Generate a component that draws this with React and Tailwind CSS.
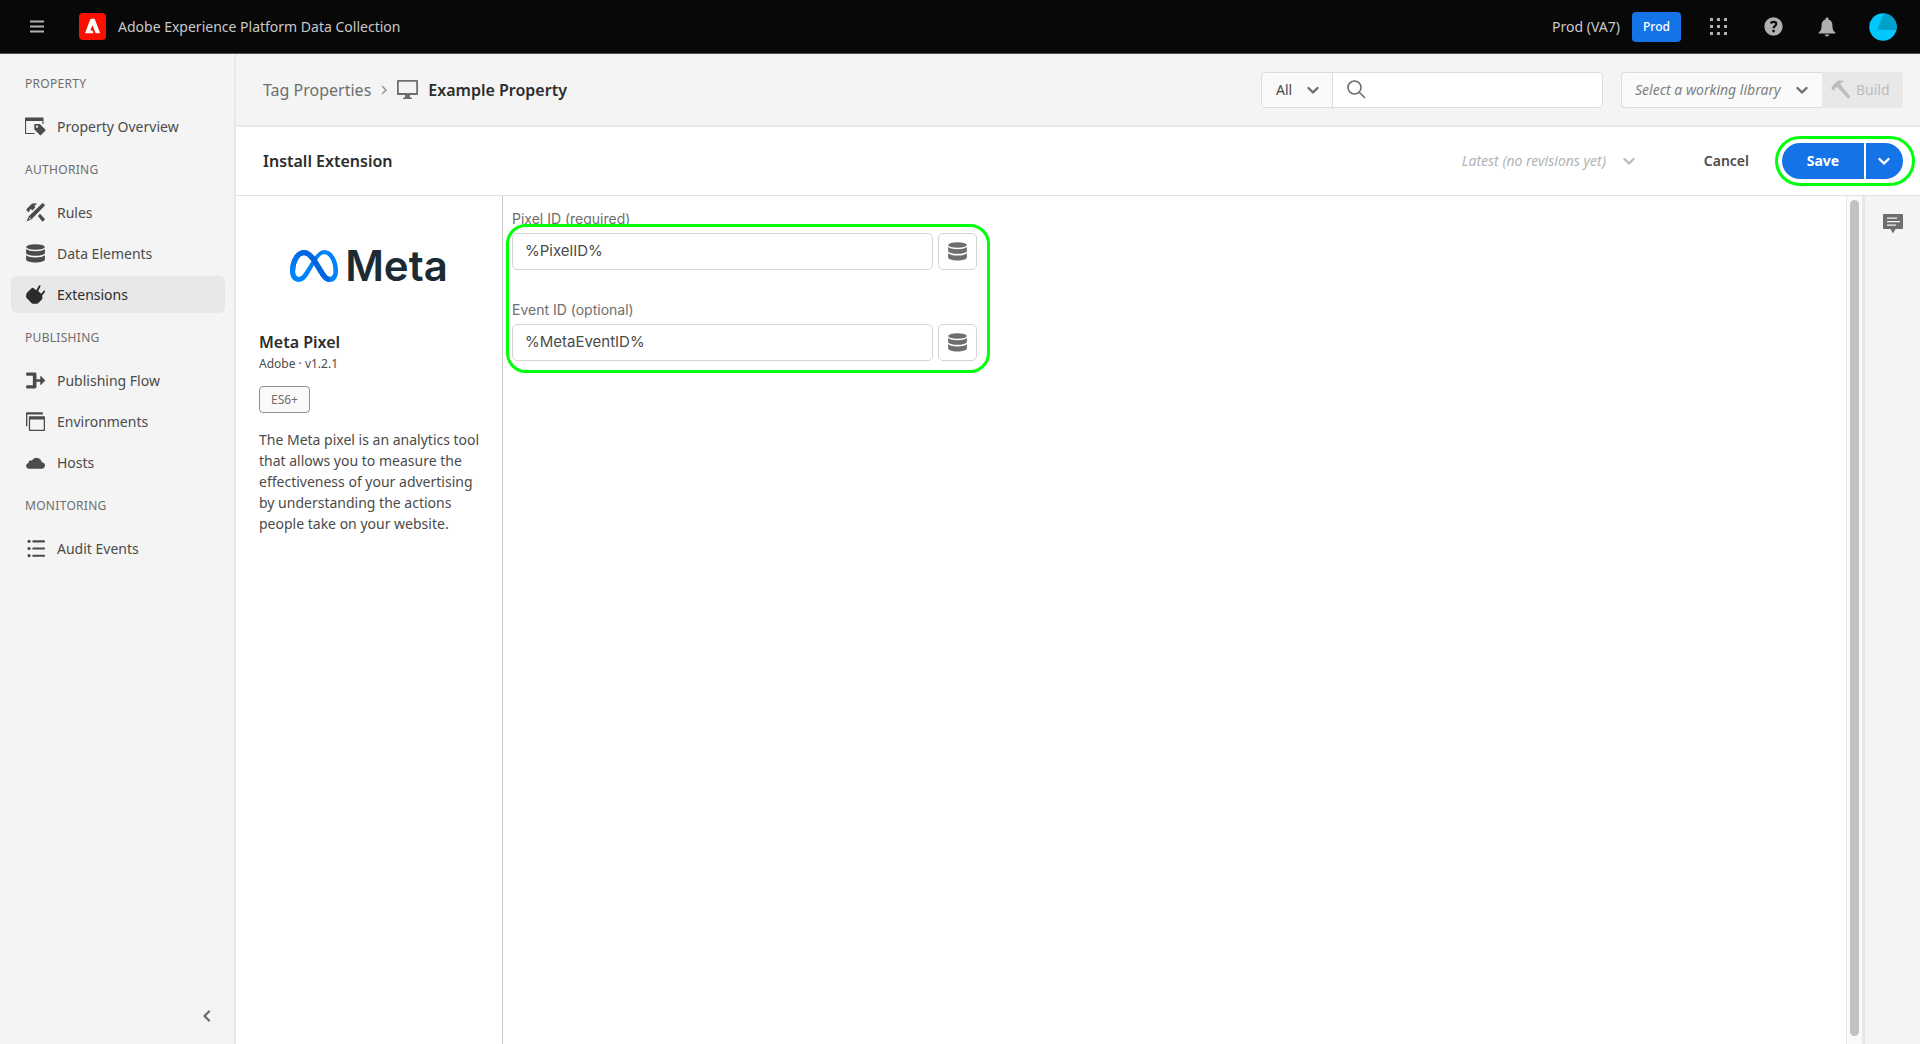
import React from "react";

function Chevron({ className }) {
  return (
    <svg className={className} width="12" height="8" viewBox="0 0 12 8" fill="none" stroke="currentColor" strokeWidth="2.4" strokeLinecap="round" strokeLinejoin="round">
      <path d="M1.5 2l4.5 4.5L10.5 2" />
    </svg>
  );
}

function Icon({ children }) {
  return (
    <svg width="19" height="19" viewBox="0 0 18 18" fill="currentColor" aria-hidden="true">
      {children}
    </svg>
  );
}

const OverviewIcon = () => (
  <svg width="21" height="19" viewBox="0 0 21 19" fill="currentColor" aria-hidden="true">
    <path d="M0 1.2C0 .8.3.5.7.5h17.1c.4 0 .7.3.7.7V7h-1.100V4H1.100v11.900h8.400V17H.7a.7.700 0 0 1-.7-.7z" />
    <path fillRule="evenodd" d="M9.8 7h4.400c.3 0 .6.100.8.300l5.300 5.300c.3.300.3.800 0 1.100l-4.300 4.400c-.3.300-.8.300-1.100 0l-5.300-5.300a1 1 0 0 1-.3-.8V7.500c0-.3.200-.5.500-.5zM12 8.400a1.200 1.200 0 1 0 0 2.400 1.200 1.200 0 0 0 0-2.400z" />
  </svg>
);

const RulesIcon = () => (
  <Icon>
    <path d="M15.200.500c.4-.4.900-.4 1.300 0l1 1c.4.400.4.900 0 1.300L5.300 15.400 1 17.400c-.3.100-.5-.1-.4-.4l2-4.400z" />
    <path d="M.1 6.500L1.700 4.400 5 1.300C6.500.1 8.700-.2 10.500.9L8.100 2.300l.6 2-2.700 2.800-1.400-1.300-1 .4.1 1.200-1.400 1.300z" />
    <path d="M11.300 12.300l2-2 4.400 4.600c.3.300.3.700 0 1l-1.400 1.400c-.3.300-.8.300-1.100 0z" />
    <path d="M2.600 15.700l1.100-2.100 1 1z" fill="#f4f4f4" />
  </Icon>
);

const DataIcon = () => (
  <Icon>
    <ellipse cx="9" cy="2.900" rx="8.900" ry="2.600" />
    <path d="M.1 4.800C2 6.400 5 6.900 9 6.900s7-.5 8.900-2.100v3.700c0 1.500-4 2.700-8.900 2.700S.1 10 .1 8.500z" />
    <path d="M.1 10.700c1.900 1.600 4.900 2.100 8.900 2.100s7-.5 8.900-2.100v4.100c0 1.600-4 2.800-8.900 2.800s-8.900-1.200-8.900-2.800z" />
  </Icon>
);

const PlugIcon = () => (
  <Icon>
    <path d="M5.100 3.400c.6-.8 1.500-.9 2.200-.3l2.400 1.800L12.100.7c.7-1.100 2.200-.3 1.600.8L11.600 5.800l2.700 2.600 2.300-2.800c.9-1 2.100-.1 1.400 1L15.300 9.900l.3 2.100c0 .7-.2 1.300-.6 1.700l-3.300 3.300c-.6.6-1.300.8-2.100.8l-3.100-.1c-.6 0-1-.2-1.400-.6l-4-4.200C.5 12.300 0 11.700.1 11l.2-2.500c.1-.6.400-1.100.8-1.500z" />
  </Icon>
);

const FlowIcon = () => (
  <Icon>
    <path d="M1.300 1.500h7.200c.8 0 1.400.6 1.400 1.300v5.100h3.600V5.300c0-.5.500-.7.900-.4l3.400 3.600c.3.300.3.700 0 1l-3.400 3.600c-.4.300-.9.100-.9-.4v-2.600H9.900v5.100c0 .7-.6 1.300-1.400 1.300H1.300C.6 16.500.1 16 .1 15.300v-.6c0-.7.5-1.200 1.200-1.200h5.200v-9H1.300C.6 4.500.1 4 .1 3.300v-.6c0-.7.5-1.200 1.200-1.200z" />
  </Icon>
);

const EnvironmentsIcon = () => (
  <Icon>
    <path d="M.7.300h14.600c.4 0 .7.300.7.700v1.400H1.300v11.200H0V1c0-.4.300-.7.700-.7z" />
    <path fillRule="evenodd" d="M3.400 4h13.900c.4 0 .7.300.7.700v12.500c0 .4-.3.700-.7.700H3.400a.7.700 0 0 1-.7-.7V4.700c0-.4.300-.7.700-.7zm.500 3v9.700h12.900V7z" />
  </Icon>
);

const CloudIcon = () => (
  <Icon>
    <path d="M3 15a2.800 2.800 0 0 1-.8-5.500 2.800 2.800 0 0 1 3.400-2.400 5 5 0 0 1 9.300 1.700c1.800.1 3.100 1.400 3.100 3.100S16.700 15 15 15z" />
  </Icon>
);

const ListIcon = () => (
  <Icon>
    <circle cx="2.900" cy="2.200" r="1.500" />
    <circle cx="2.900" cy="9" r="1.500" />
    <circle cx="2.900" cy="15.800" r="1.500" />
    <rect x="6" y="1.300" width="12" height="1.900" rx=".8" />
    <rect x="6" y="8.100" width="12" height="1.900" rx=".8" />
    <rect x="6" y="14.900" width="12" height="1.900" rx=".8" />
  </Icon>
);

const sections = [
  { title: "PROPERTY", items: [{ label: "Property Overview", icon: OverviewIcon }] },
  {
    title: "AUTHORING",
    items: [
      { label: "Rules", icon: RulesIcon },
      { label: "Data Elements", icon: DataIcon },
      { label: "Extensions", icon: PlugIcon, active: true },
    ],
  },
  {
    title: "PUBLISHING",
    items: [
      { label: "Publishing Flow", icon: FlowIcon },
      { label: "Environments", icon: EnvironmentsIcon },
      { label: "Hosts", icon: CloudIcon },
    ],
  },
  { title: "MONITORING", items: [{ label: "Audit Events", icon: ListIcon }] },
];

function TopBar() {
  return (
    <header className="flex h-[54px] shrink-0 items-center border-b border-[#555] bg-[#080808] pr-[23px] pl-[30px] text-[#c8c8c8]">
      <button aria-label="Menu" className="text-[#b0b0b0]">
        <svg width="14" height="13" viewBox="0 0 14 13" fill="currentColor">
          <path d="M0 .5h14v2H0zM0 5.500h14v2H0zM0 10.500h14v2H0z" />
        </svg>
      </button>
      <svg className="ml-[35px]" width="27" height="27" viewBox="0 0 27 27" aria-hidden="true">
        <rect width="27" height="27" rx="4" fill="#fa0f00" />
        <path d="M6 20.200L11.200 6.600c.2-.5.500-.8 1.100-.8h2.500c.6 0 .9.300 1.100.8l5.300 13.600h-3.900c-.5 0-.8-.2-1-.7l-2.800-7.300-2.300 5.200h2.200l1.100 2.800z" fill="#fff" />
      </svg>
      <span className="ml-3 text-sm">Adobe Experience Platform Data Collection</span>
      <div className="ml-auto flex items-center">
        <span className="text-sm">Prod (VA7)</span>
        <button className="ml-3 h-[30px] w-[49px] rounded bg-[#1473e6] text-xs font-medium text-white">Prod</button>
        <button aria-label="Apps" className="ml-[29px] text-[#b0b0b0]">
          <svg width="18" height="17" viewBox="0 0 18 17" fill="currentColor">
            <path d="M0 0h3v3H0zM7 0h3v3H7zM14 0h3v3h-3zM0 7h3v3H0zM7 7h3v3H7zM14 7h3v3h-3zM0 14h3v3H0zM7 14h3v3H7zM14 14h3v3h-3z" />
          </svg>
        </button>
        <button aria-label="Help" className="ml-9 text-[#b0b0b0]">
          <Icon>
            <circle cx="9" cy="9" r="8.700" />
            <path d="M6.200 5.900C7 5 8 4.600 9.200 4.600c1.500 0 2.400.8 2.400 2 0 2-2.600 2-2.600 4" stroke="#080808" strokeWidth="2" fill="none" />
            <circle cx="9" cy="13.300" r="1.300" fill="#080808" />
          </Icon>
        </button>
        <button aria-label="Notifications" className="ml-[35px] text-[#b0b0b0]">
          <svg width="18" height="20" viewBox="0 0 18 20" fill="currentColor">
            <path d="M9 .5c.9 0 1.500.6 1.500 1.400v.5c2.500.7 3.900 2.700 3.900 5.500 0 4.600 1.100 6 2.700 7.400.5.500.3 1.300-.4 1.300H1.300c-.7 0-.9-.8-.4-1.300C2.500 13.900 3.600 12.500 3.600 7.900c0-2.800 1.400-4.800 3.900-5.500v-.5C7.500 1.100 8.100.5 9 .5zM6.800 17.600h4.400c-.2 1.200-1 1.900-2.200 1.900s-2-.7-2.200-1.900z" />
          </svg>
        </button>
        <button aria-label="Account" className="ml-[33px]">
          <svg width="28" height="28" viewBox="0 0 28 28">
            <circle cx="14" cy="14" r="13.700" fill="#00c8ff" />
            <path d="M14.500.4A13.700 13.700 0 0 1 27.400 17L8.500 16.800z" fill="#00a0cc" />
          </svg>
        </button>
      </div>
    </header>
  );
}

function Sidebar() {
  return (
    <aside className="flex w-[236px] shrink-0 flex-col border-r-2 border-[#e8e8e8] bg-[#f4f4f4] pt-[9px] pr-[9px] pl-[11px]">
      <nav className="flex flex-col gap-1">
        {sections.map(({ title, items }) => (
          <React.Fragment key={title}>
            <h2 className="flex h-[41px] items-center pl-[14px] text-xs tracking-wide text-[#6e6e6e]">{title}</h2>
            {items.map(({ label, icon: ItemIcon, active }) => (
              <a
                key={label}
                href="#"
                className={
                  active
                    ? "flex h-[37px] items-center gap-[11px] rounded-md bg-[#e8e8e8] pl-[14px] text-sm text-[#2c2c2c]"
                    : "flex h-[37px] items-center gap-[11px] rounded-md pl-[14px] text-sm text-[#4b4b4b]"
                }
              >
                <span className="flex w-[21px] items-center justify-center">
                  <ItemIcon />
                </span>
                {label}
              </a>
            ))}
          </React.Fragment>
        ))}
      </nav>
      <button aria-label="Collapse" className="mt-auto mr-3 mb-[18px] flex h-5 w-3 items-center justify-center self-end text-[#6e6e6e]">
        <Chevron className="shrink-0 rotate-90" />
      </button>
    </aside>
  );
}

function PropertyBar() {
  return (
    <div className="flex h-[73px] shrink-0 items-center border-b-2 border-[#e8e8e8] bg-[#f4f4f4] pr-[17px] pl-[27px]">
      <a href="#" className="text-base text-[#6e6e6e]">Tag Properties</a>
      <svg className="mx-[10px]" width="6" height="10" viewBox="0 0 6 10" fill="none" stroke="#959595" strokeWidth="1.500">
        <path d="M1 1l4 4-4 4" />
      </svg>
      <svg width="21" height="19" viewBox="0 0 21 19" fill="#6e6e6e" aria-hidden="true">
        <path fillRule="evenodd" d="M.7 0h19.600c.4 0 .7.300.7.700v13.600c0 .4-.3.700-.7.700H13v2.400h1.300c.4 0 .7.300.7.600v1H6v-1c0-.3.300-.6.700-.6H8V15H.7a.7.700 0 0 1-.7-.7V.7C0 .3.300 0 .7 0zM1.800 1.800v11.200h17.400V1.800z" />
      </svg>
      <h1 className="ml-[10px] text-base font-semibold text-[#2c2c2c]">Example Property</h1>

      <div className="ml-auto flex h-9 w-[342px] rounded border border-[#dcdcdc] bg-white">
        <div className="relative flex w-[71px] items-center rounded-l bg-[#fafafa]">
          <select aria-label="Search scope" className="h-full w-full appearance-none border-r border-[#dcdcdc] pl-[14px] text-sm text-[#4b4b4b]">
            <option>All</option>
          </select>
          <Chevron className="pointer-events-none absolute right-[14px] text-[#6e6e6e]" />
        </div>
        <label className="flex flex-1 items-center pl-[14px]">
          <svg width="19" height="19" viewBox="0 0 19 19" fill="none" stroke="#6e6e6e" strokeWidth="1.600">
            <circle cx="7.500" cy="7.500" r="6.500" />
            <path d="M12.200 12.200l5.800 5.800" />
          </svg>
          <input type="search" aria-label="Search" className="ml-2 w-full min-w-0 flex-1 text-sm outline-none" />
        </label>
      </div>

      <div className="ml-[18px] flex h-9">
        <div className="relative flex w-[201px] items-center rounded-l border border-r-0 border-[#dcdcdc] bg-[#fafafa]">
          <select aria-label="Working library" className="h-full w-full appearance-none pl-[13px] text-sm text-[#808080] italic">
            <option>Select a working library</option>
          </select>
          <Chevron className="pointer-events-none absolute right-[14px] text-[#6e6e6e]" />
        </div>
        <button disabled className="flex w-[81px] items-center gap-[6px] rounded-r bg-[#e8e8e8] pl-[9px] text-sm text-[#bcbcbc]">
          <Icon>
            <path d="M0 7.600l2-2.700 3-3.100C7 .2 10 0 12.400 1.400L9 2.800l.4 2.100 8.400 10.200c.4.500.3 1-.1 1.400l-.7.700c-.4.400-.9.400-1.300-.1L6.600 7.400 5 6.800l-1.400.7.100 1.300-1.400 1.500z" />
          </Icon>
          Build
        </button>
      </div>
    </div>
  );
}

function ActionBar() {
  return (
    <div className="flex h-[69px] shrink-0 items-center border-b border-[#e4e4e4] pr-[17px] pl-[27px]">
      <h2 className="text-base font-semibold text-[#2c2c2c]">Install Extension</h2>
      <div className="relative ml-auto flex w-[173px] items-center">
        <select disabled aria-label="Revision" className="w-full appearance-none text-sm text-[#b3b3b3] italic opacity-100">
          <option>Latest (no revisions yet)</option>
        </select>
        <Chevron className="pointer-events-none absolute right-0 text-[#bcbcbc]" />
      </div>
      <button className="ml-[69px] text-sm font-semibold text-[#4b4b4b]">Cancel</button>
      <div className="relative ml-[33px] flex h-9 gap-[2px] text-white">
        <button className="w-[82px] rounded-l-full bg-[#1473e6] text-sm font-bold">Save</button>
        <button aria-label="More save options" className="flex w-[37px] items-center justify-center rounded-r-full bg-[#1473e6] pr-[2px]">
          <Chevron />
        </button>
        <div className="pointer-events-none absolute -inset-y-[7px] -right-3 -left-[7px] rounded-full border-3 border-[#00ff0a]" />
      </div>
    </div>
  );
}

function MetaLogo() {
  const outline =
    "M6.915 4.03c-1.968 0-3.683 1.28-4.871 3.113C.704 9.208 0 11.883 0 14.449c0 .706.07 1.369.21 1.973a6.624 6.624 0 0 0 .265.86 5.297 5.297 0 0 0 .371.761c.696 1.159 1.818 1.927 3.593 1.927 1.497 0 2.633-.671 3.965-2.444.76-1.012 1.144-1.626 2.663-4.32l.756-1.339.186-.325c.061.1.121.196.183.3l2.152 3.595c.724 1.21 1.665 2.556 2.47 3.314 1.046.987 1.992 1.22 3.06 1.22 1.075 0 1.876-.355 2.455-.843a3.743 3.743 0 0 0 .81-.973c.542-.939.861-2.127.861-3.745 0-2.72-.681-5.357-2.084-7.45-1.282-1.912-2.957-2.93-4.716-2.93-1.047 0-2.088.467-3.053 1.308-.652.57-1.257 1.29-1.82 2.05-.69-.875-1.335-1.547-1.958-2.056-1.182-.966-2.315-1.303-3.454-1.303zm10.16 2.053c1.147 0 2.188.758 2.992 1.999 1.132 1.748 1.647 4.195 1.647 6.4 0 1.548-.368 2.9-1.839 2.9-.58 0-1.027-.23-1.664-1.004-.496-.601-1.343-1.878-2.832-4.358l-.617-1.028a44.908 44.908 0 0 0-1.255-1.98c.07-.109.141-.224.211-.327 1.12-1.667 2.118-2.602 3.358-2.602zm-10.201.553c1.265 0 2.058.791 2.675 1.446.307.327.737.871 1.234 1.579l-1.02 1.566c-.757 1.163-1.882 3.017-2.837 4.338-1.191 1.649-1.81 1.817-2.486 1.817-.524 0-1.038-.237-1.383-.794-.263-.426-.464-1.13-.464-2.046 0-2.221.63-4.535 1.66-6.088.454-.687.964-1.226 1.533-1.533a2.264 2.264 0 0 1 1.088-.285z";
  return (
    <div className="flex items-center justify-center gap-[7px]">
      <svg width="48" height="32" viewBox="0 4 24 16" aria-hidden="true">
        <defs>
          <clipPath id="meta-outline">
            <path d={outline} clipRule="evenodd" />
          </clipPath>
          <linearGradient id="meta-left" x1="0" y1="1" x2="0" y2="0">
            <stop offset="0" stopColor="#0082fb" />
            <stop offset="1" stopColor="#0064e0" />
          </linearGradient>
        </defs>
        <path d={outline} fill="#0082fb" />
        <g clipPath="url(#meta-outline)">
          <rect x="0" y="4" width="7" height="10" fill="url(#meta-left)" />
          <path d="M6.900 5.300c3.600 0 5.100 3.700 6.800 6.400 2 3.200 3.400 7 6.200 7" fill="none" stroke="#0064e0" strokeWidth="3" />
        </g>
      </svg>
      <span className="font-['Inter'] text-[42px] leading-[44px] font-semibold text-[#1c2b33]">Meta</span>
    </div>
  );
}

function ExtensionInfo() {
  return (
    <section className="w-[267px] shrink-0 border-r border-[#c8c8c8] px-[23px] pt-12 text-[#4b4b4b]">
      <MetaLogo />
      <h3 className="mt-[42px] text-base leading-6 font-semibold text-[#2c2c2c]">Meta Pixel</h3>
      <p className="text-xs leading-5">Adobe · v1.2.1</p>
      <span className="mt-3 inline-flex h-[27px] items-center rounded border border-[#909090] bg-[#fafafa] px-[11px] text-xs text-[#6e6e6e]">ES6+</span>
      <p className="mt-4 -mr-2 text-sm leading-[21px]">
        The Meta pixel is an analytics tool that allows you to measure the effectiveness of your advertising by understanding the actions people take on your website.
      </p>
    </section>
  );
}

function Field({ id, label, value }) {
  return (
    <div className="flex flex-col gap-1">
      <label htmlFor={id} className="text-sm leading-5 text-[#6e6e6e]">{label}</label>
      <div className="flex h-[37px] gap-[5px]">
        <input
          id={id}
          defaultValue={value}
          className="min-w-0 flex-1 rounded-[5px] border border-[#d3d3d3] bg-white px-3 text-[15px] text-[#4b4b4b]"
        />
        <button aria-label="Select data element" className="flex w-[39px] items-center justify-center rounded-[5px] border border-[#d3d3d3] bg-white text-[#6e6e6e]">
          <DataIcon />
        </button>
      </div>
    </div>
  );
}

function ConfigForm() {
  return (
    <form className="flex-1 pt-[13px] pl-[9px] font-['Inter',sans-serif]">
      <div className="relative flex w-[465px] flex-col gap-[30px]">
        <Field id="pixel-id" label="Pixel ID (required)" value="%PixelID%" />
        <Field id="event-id" label="Event ID (optional)" value="%MetaEventID%" />
        <div className="pointer-events-none absolute top-[15px] -right-[13px] -bottom-3 -left-[6px] rounded-[20px] border-3 border-[#00ff0a]" />
      </div>
    </form>
  );
}

export default function App() {
  return (
    <div className="flex min-h-screen flex-col bg-white font-['Noto_Sans',sans-serif]">
      <TopBar />
      <div className="flex flex-1">
        <Sidebar />
        <main className="flex min-w-0 flex-1 flex-col">
          <PropertyBar />
          <ActionBar />
          <div className="flex flex-1">
            <ExtensionInfo />
            <ConfigForm />
            <div className="flex w-4 shrink-0 justify-center border-l border-[#e8e8e8] bg-[#fafafa] pt-1 pb-2">
              <div className="w-[9px] rounded-full bg-[#c1c1c1]" />
            </div>
            <aside className="w-[58px] shrink-0 border-l-3 border-[#e8e8e8] bg-[#f4f4f4] pt-[18px] pl-[18px]">
              <button aria-label="Comments" className="block text-[#6e6e6e]">
                <svg width="20" height="20" viewBox="0 0 20 20" fill="currentColor">
                  <path fillRule="evenodd" d="M1 0h18c.6 0 1 .4 1 1v13c0 .6-.4 1-1 1h-6.500L10 19.500 7.500 15H1c-.6 0-1-.4-1-1V1c0-.6.4-1 1-1zm3 3.500v1.200h10V3.500zM4 7v1.200h13V7zm0 3.500v1.200h9v-1.200z" />
                </svg>
              </button>
            </aside>
          </div>
        </main>
      </div>
    </div>
  );
}
